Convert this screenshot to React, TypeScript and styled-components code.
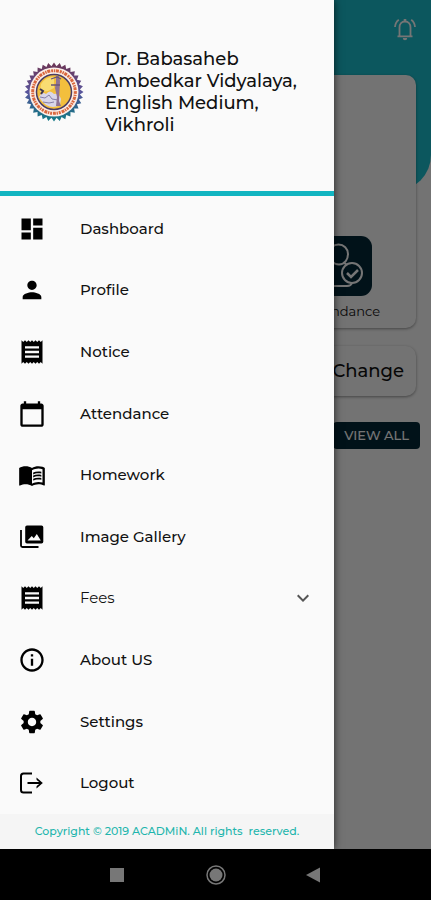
import React from "react";
import styled, { createGlobalStyle, css } from "styled-components";
import {
  MdCalendarToday,
  MdDashboard,
  MdExpandMore,
  MdInfoOutline,
  MdMenuBook,
  MdPerson,
  MdReceipt,
  MdSettings,
} from "react-icons/md";

const GlobalStyle = createGlobalStyle`
  * { box-sizing: border-box; }
  body {
    margin: 0;
    background: #000;
    font-family: Montserrat, Inter, "Open Sans", sans-serif;
    color: #111;
  }
  button { font: inherit; color: inherit; border: 0; background: none; padding: 0; cursor: pointer; }
`;

const Phone = styled.div`
  display: flex;
  flex-direction: column;
  min-height: 100vh;
`;

const Screen = styled.div`
  position: relative;
  display: flex;
  flex-direction: column;
  flex: 1;
  overflow: hidden;
  background: #fafafa;
`;

const Hero = styled.header`
  display: flex;
  justify-content: flex-end;
  align-items: flex-start;
  height: 191px;
  padding: 16px 13px;
  background: #1cbdcc;
  border-radius: 0 0 36px 36px;
`;

const BellButton = styled.button`
  display: flex;
  color: #fff;
`;

const Content = styled.main`
  display: flex;
  flex-direction: column;
  margin-top: -116px;
  padding: 0 15px;
`;

const Card = styled.section<{ $tall?: boolean }>`
  display: flex;
  justify-content: flex-end;
  background: #fafafa;
  border-radius: 10px;
  box-shadow: 0 1px 3px rgba(0, 0, 0, 0.4);
  ${(p) =>
    p.$tall
      ? css`
          align-items: flex-end;
          height: 253px;
          padding: 8px 36px;
        `
      : css`
          align-items: center;
          height: 50px;
          margin-top: 18px;
          padding: 0 12px;
        `}
`;

const Tile = styled.button`
  display: flex;
  flex-direction: column;
  align-items: center;
  gap: 6px;
  font-size: 13px;
  line-height: 18px;
`;

const TileIcon = styled.span`
  display: flex;
  align-items: center;
  justify-content: center;
  width: 60px;
  height: 60px;
  border-radius: 11px;
  background: #032938;
`;

const ChangeButton = styled.button`
  font-size: 18px;
  font-weight: 500;
`;

const ViewAll = styled.button`
  align-self: flex-end;
  margin: 26px -4px 0 0;
  padding: 0 11px;
  border-radius: 4px;
  background: #032938;
  color: #fff;
  font-size: 13px;
  font-weight: 500;
  line-height: 27px;
`;

const Scrim = styled.div`
  position: absolute;
  inset: 0;
  background: rgba(0, 0, 0, 0.54);
`;

const Drawer = styled.aside`
  position: absolute;
  inset: 0 auto 0 0;
  display: flex;
  flex-direction: column;
  width: 77.5%;
  background: #fafafa;
  box-shadow: 0 0 8px rgba(0, 0, 0, 0.7);
`;

const School = styled.div`
  display: flex;
  align-items: center;
  gap: 21px;
  padding: 48px 24px 55px;
  border-bottom: 5px solid #12b5c1;
`;

const Seal = styled.svg`
  flex: none;
  width: 60px;
  height: 60px;
`;

const SchoolName = styled.h1`
  margin: 0;
  font-size: 18px;
  font-weight: 500;
  line-height: 22px;
`;

const Menu = styled.nav`
  display: flex;
  flex: 1;
  flex-direction: column;
  padding-top: 2px;
`;

const MenuItem = styled.button<{ $light?: boolean }>`
  display: flex;
  flex: 1;
  align-items: center;
  padding: 0 19px 0 18px;
  font-size: 15px;
  font-weight: ${(p) => (p.$light ? 400 : 500)};
  line-height: 24px;
  text-align: left;
`;

const MenuIcon = styled.span`
  display: flex;
  width: 62px;
  color: #000;
`;

const MenuLabel = styled.span`
  flex: 1;
`;

const Chevron = styled(MdExpandMore)`
  color: #555;
`;

const Copyright = styled.footer`
  height: 35px;
  background: #f5f5f5;
  color: #1fb5ad;
  font-size: 11px;
  font-weight: 500;
  line-height: 35px;
  text-align: center;
  white-space: pre;
`;

const SystemBar = styled.div`
  display: grid;
  grid-template-columns: repeat(3, 98px);
  justify-content: center;
  height: 51px;
  background: #000;
`;

const SystemButton = styled.button`
  display: flex;
  align-items: center;
  justify-content: center;
`;

const teeth = Array.from({ length: 32 }, (_, i) => {
  const point = (step: number, r: number) => {
    const a = (step * Math.PI) / 32;
    return `${(30 + r * Math.sin(a)).toFixed(2)},${(30 - r * Math.cos(a)).toFixed(2)}`;
  };
  return `${point(i * 2, 29.5)} ${point(i * 2 + 1, 26)}`;
}).join(" ");

function SchoolSeal() {
  return (
    <Seal viewBox="0 0 60 60" role="img" aria-label="School seal">
      <defs>
        <linearGradient id="rim" x1="0" y1="0" x2="0" y2="1">
          <stop offset="0" stopColor="#6d3554" />
          <stop offset="0.5" stopColor="#59559c" />
          <stop offset="0.8" stopColor="#27698a" />
          <stop offset="1" stopColor="#147b86" />
        </linearGradient>
      </defs>
      <polygon points={teeth} fill="url(#rim)" />
      <circle cx="30" cy="30" r="24.5" fill="#fbeee8" />
      <circle cx="30" cy="30" r="21.3" fill="none" stroke="#d9683f" strokeWidth="3" strokeDasharray="2 0.8 1.4 0.7 3 0.9" />
      <circle cx="30" cy="30" r="17.5" fill="#f3bf3d" stroke="#4b3d63" strokeWidth="1.5" />
      <path d="M17 22q5-8 13-7v11l-6 3-8 1z" fill="#f8dc72" />
      <path d="M15 35q3-6 7-3 4-5 8 0 5-1 7 5l-1 6q-7 4-14 0-5-4-7-8z" fill="#d9d6e8" />
      <path d="M16 35l5 1 4-3 3 4 6 1M19 40l6 1 5-1" fill="none" stroke="#8580a8" strokeWidth="1" />
      <path d="M32 14h3l1 5-1 20 2 5h-5l1-9-2-9 1-5z" fill="#8f7394" />
      <path d="M27 17l6-2 4 2M27 23h9" fill="none" stroke="#6a5577" strokeWidth="1.3" />
      <path d="M16 27l3 2-2 3" fill="none" stroke="#3e3652" strokeWidth="2" />
    </Seal>
  );
}

function BellIcon() {
  return (
    <svg width="26" height="26" viewBox="0 0 26 26" fill="none" stroke="currentColor" strokeWidth="1.8" aria-hidden="true">
      <path d="M5.5 20.300h15M7.500 20v-8.500c0-3.500 2.200-6 5.500-6s5.500 2.500 5.500 6V20" />
      <path d="M13 3v2.500" strokeWidth="2.600" />
      <path d="M10.800 22h4.400a2.200 2.200 0 0 1-4.400 0Z" fill="currentColor" stroke="none" />
      <path d="M6.800 3.800C4.500 5.500 3.200 7.800 3 11M19.200 3.800C21.500 5.500 22.800 7.800 23 11" />
    </svg>
  );
}

function GalleryIcon() {
  return (
    <svg width="28" height="28" viewBox="0 0 28 28" fill="currentColor" aria-hidden="true">
      <path
        fillRule="evenodd"
        d="M9 2.500h14.500q1.800 0 1.800 1.800v14.400q0 1.800-1.800 1.800H9q-1.800 0-1.800-1.800V4.300Q7.200 2.500 9 2.500ZM9.500 17.500h13.300l-4-6.500-3 4.200-2-2.200Z"
      />
      <path d="M3 7v15.500q0 1.500 1.500 1.500H20.500" fill="none" stroke="currentColor" strokeWidth="1.800" />
    </svg>
  );
}

function LogoutIcon() {
  return (
    <svg width="28" height="28" viewBox="0 0 28 28" fill="none" stroke="currentColor" strokeWidth="2" aria-hidden="true">
      <path d="M14 4.500H5.500Q3 4.500 3 7v14q0 2.500 2.500 2.500H14M9.500 14H22" />
      <path d="M18.500 8.500 24.800 14 18.500 19.500Z" fill="currentColor" stroke="none" />
      <path d="M18 10.500 21.200 13H18ZM18 17.500 21.200 15H18Z" fill="#fafafa" stroke="none" />
    </svg>
  );
}

function AttendanceIcon() {
  return (
    <svg width="48" height="48" viewBox="0 0 48 48" fill="none" stroke="#fff" strokeWidth="2" aria-hidden="true">
      <path d="M11 12a9.500 9.500 0 0 1 19 0c0 5-3 10.500-9 10.500S11 17 11 12Z" />
      <path d="M16 21C8 25 3 30 3 38c0 4 2 6 6 6h20q4 0 5-3M26 21l5 3" />
      <circle cx="34" cy="31" r="10" fill="#032938" />
      <path d="m29 31 4 4 7-7" strokeWidth="2.500" />
    </svg>
  );
}

const menu: { label: string; icon: React.ReactNode; expandable?: boolean }[] = [
  { label: "Dashboard", icon: <MdDashboard size={28} /> },
  { label: "Profile", icon: <MdPerson size={28} /> },
  { label: "Notice", icon: <MdReceipt size={28} /> },
  { label: "Attendance", icon: <MdCalendarToday size={28} /> },
  { label: "Homework", icon: <MdMenuBook size={28} /> },
  { label: "Image Gallery", icon: <GalleryIcon /> },
  { label: "Fees", icon: <MdReceipt size={28} />, expandable: true },
  { label: "About US", icon: <MdInfoOutline size={28} /> },
  { label: "Settings", icon: <MdSettings size={28} /> },
  { label: "Logout", icon: <LogoutIcon /> },
];

export default function App() {
  return (
    <Phone>
      <GlobalStyle />
      <Screen>
        <Hero>
          <BellButton aria-label="Notifications">
            <BellIcon />
          </BellButton>
        </Hero>
        <Content>
          <Card $tall>
            <Tile>
              <TileIcon>
                <AttendanceIcon />
              </TileIcon>
              Attendance
            </Tile>
          </Card>
          <Card>
            <ChangeButton>Change</ChangeButton>
          </Card>
          <ViewAll>VIEW ALL</ViewAll>
        </Content>
        <Scrim />
        <Drawer>
          <School>
            <SchoolSeal />
            <SchoolName>Dr. Babasaheb Ambedkar Vidyalaya, English Medium, Vikhroli</SchoolName>
          </School>
          <Menu>
            {menu.map((item) => (
              <MenuItem
                key={item.label}
                $light={item.expandable}
                aria-expanded={item.expandable ? false : undefined}
              >
                <MenuIcon>{item.icon}</MenuIcon>
                <MenuLabel>{item.label}</MenuLabel>
                {item.expandable && <Chevron size={24} />}
              </MenuItem>
            ))}
          </Menu>
          <Copyright>{"Copyright © 2019 ACADMiN. All rights  reserved."}</Copyright>
        </Drawer>
      </Screen>
      <SystemBar>
        <SystemButton aria-label="Recent apps">
          <svg width="20" height="20" viewBox="0 0 20 20" fill="#777">
            <rect x="2" y="3" width="14" height="14" />
          </svg>
        </SystemButton>
        <SystemButton aria-label="Home">
          <svg width="20" height="20" viewBox="0 0 20 20" fill="#777">
            <circle cx="10" cy="10" r="6.500" />
            <circle cx="10" cy="10" r="9" fill="none" stroke="#777" strokeWidth="1.500" />
          </svg>
        </SystemButton>
        <SystemButton aria-label="Back">
          <svg width="20" height="20" viewBox="0 0 20 20" fill="#777">
            <path d="M2 10 16 2.500v15Z" />
          </svg>
        </SystemButton>
      </SystemBar>
    </Phone>
  );
}
